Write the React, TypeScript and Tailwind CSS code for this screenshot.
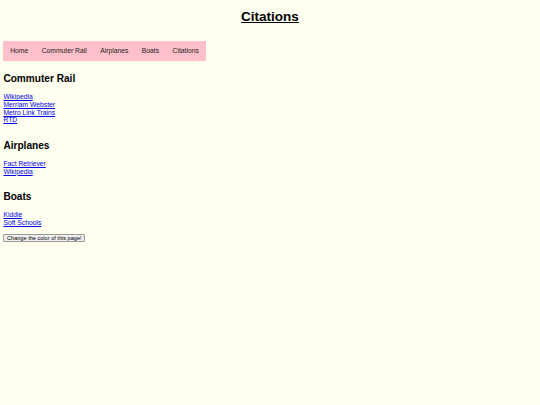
import React from 'react';

const sections = [
  {
    title: 'Commuter Rail',
    links: ['Wikipedia', 'Merriam Webster', 'Metro Link Trains', 'RTD'],
  },
  {
    title: 'Airplanes',
    links: ['Fact Retriever', 'Wikipedia'],
  },
  {
    title: 'Boats',
    links: ['Kiddle', 'Soft Schools'],
  },
];

const navItems = ['Home', 'Commuter Rail', 'Airplanes', 'Boats', 'Citations'];

export default function App() {
  return (
    <div className="min-h-screen bg-[#fffff0] px-[3.4px] pt-[9px] font-['Liberation_Sans',Arial,sans-serif] text-black">
      <h1 className="text-center text-[13.5px] leading-[15.5px] font-bold underline">Citations</h1>

      <nav className="mt-[16.5px] flex">
        <ul className="flex h-[20px] items-center bg-[#ffc0cb]">
          {navItems.map((item) => (
            <li key={item}>
              <a href="#" className="block px-[6.75px] text-[6.75px] leading-[7.76px] text-[#222]">
                {item}
              </a>
            </li>
          ))}
        </ul>
      </nav>

      {sections.map((s, i) => (
        <section key={s.title} className={i === 0 ? 'mt-[12.2px]' : 'mt-[15.8px]'}>
          <h2 className="text-[10.1px] leading-[11.6px] font-bold">{s.title}</h2>
          <div className="mt-[8.4px] flex flex-col items-start">
            {s.links.map((l) => (
              <a key={l} href="#" className="text-[6.75px] leading-[7.76px] text-[#0000ee] underline">
                {l}
              </a>
            ))}
          </div>
        </section>
      ))}

      <button className="mt-[7.5px] block h-[8px] rounded-[1px] border border-[#9a9a9a] bg-[#efefef] px-[2.6px] text-[5.6px] leading-[6px] text-black">
        Change the color of this page!
      </button>
    </div>
  );
}
